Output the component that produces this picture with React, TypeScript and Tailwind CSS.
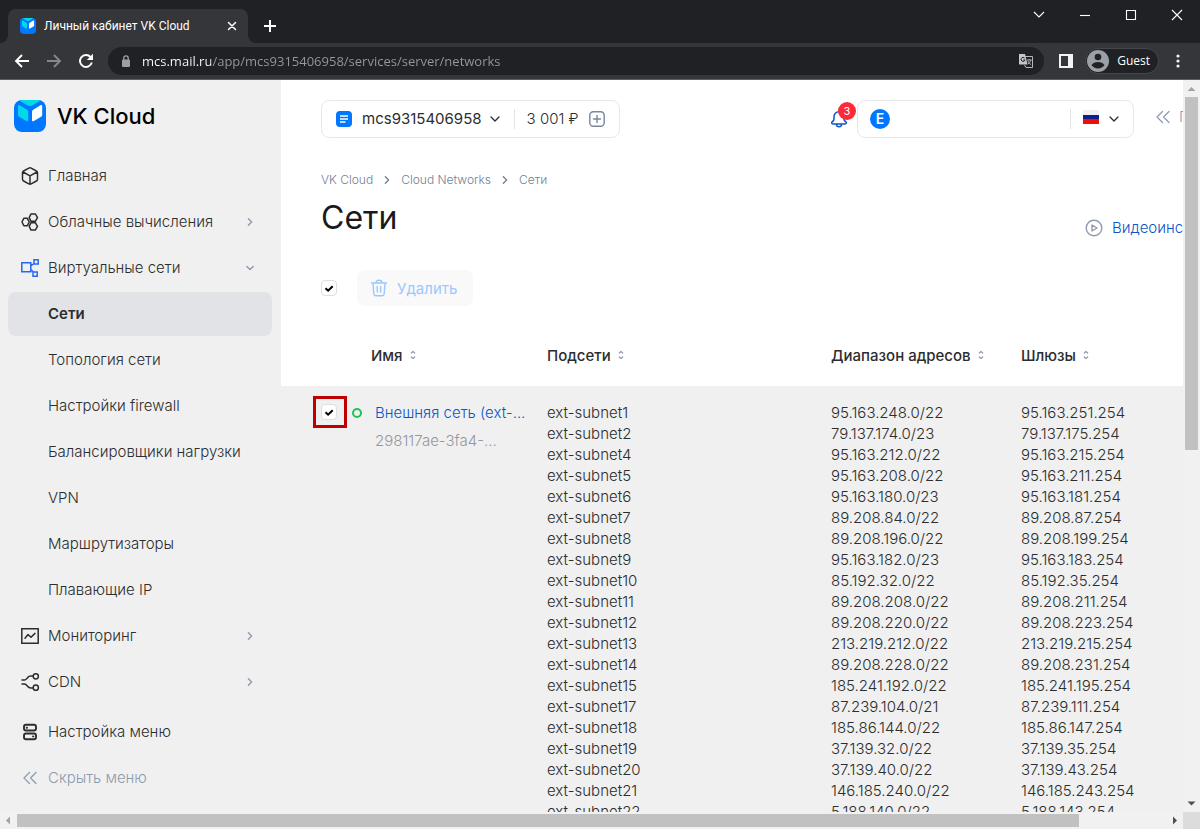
import type { ReactNode } from "react";

const stroke = {
  fill: "none",
  stroke: "currentColor",
  strokeLinecap: "round" as const,
  strokeLinejoin: "round" as const,
};

function Logo({ className }: { className: string }) {
  return (
    <svg viewBox="0 0 32 32" className={className} aria-hidden="true">
      <rect width="32" height="32" rx="8" fill="#0077ff" />
      <path d="M7 0h18c1 .3 1 .9.2 1.4l-7 4.100c-1.400.8-3 .8-4.400 0l-7-4.100C6 .9 6 .3 7 0Z" fill="#00d9e8" />
      <path d="M4 6.200c0-1 .8-1.500 1.700-1l7 4.200c1 .6 1.500 1.500 1.500 2.600v8c0 1.200-.9 1.700-1.900 1.100l-6.800-4C4.500 16.500 4 15.600 4 14.500Z" fill="#00d9e8" />
      <path d="M28.200 6.200c0-1-.8-1.500-1.700-1l-7 4.200c-1 .6-1.500 1.500-1.500 2.600v8c0 1.200.9 1.700 1.900 1.100l6.800-4c1-.6 1.500-1.500 1.500-2.600Z" fill="#fff" />
    </svg>
  );
}

function Chevron({ className, dir, width = "1.3" }: { className: string; dir: "down" | "right"; width?: string }) {
  return (
    <svg viewBox="0 0 10 10" className={className} {...stroke} strokeWidth={width} aria-hidden="true">
      <path d={dir === "down" ? "M1 3l4 4 4-4" : "M3 1l4 4-4 4"} />
    </svg>
  );
}

function DoubleLeft({ className }: { className: string }) {
  return (
    <svg viewBox="0 0 20 20" className={className} {...stroke} strokeWidth="1.3" aria-hidden="true">
      <path d="M9.500 4.500L4 10l5.500 5.500M16 4.500L10.500 10l5.500 5.500" />
    </svg>
  );
}

function NavIcon({ children, width = "1.5" }: { children: ReactNode; width?: string }) {
  return (
    <svg viewBox="0 0 20 20" className="size-5 shrink-0" {...stroke} strokeWidth={width} aria-hidden="true">
      {children}
    </svg>
  );
}

const icons = {
  home: (
    <NavIcon>
      <path d="M8.800 2.100a2.400 2.400 0 0 1 2.400 0l5.200 2.900a2 2 0 0 1 1.100 1.800v6.400a2 2 0 0 1-1.100 1.800l-5.200 2.900a2.400 2.400 0 0 1-2.400 0L3.600 15a2 2 0 0 1-1.100-1.800V6.800A2 2 0 0 1 3.600 5ZM3 6l7 3.900L17 6M10 9.900V18" />
    </NavIcon>
  ),
  compute: (
    <NavIcon>
      <path d="M3.800 6.300h3.500L9.200 10l-1.900 3.700H3.800L2 10ZM11 1.900h4.300l2.200 3.700-2.200 3.700H11L9.200 5.600ZM11 10.700h4.300l2.200 3.700-2.200 3.700H11l-1.800-3.700Z" />
    </NavIcon>
  ),
  network: (
    <NavIcon>
      <path d="M1.800 4.800h9v9h-9ZM14 1.800h4.200V6H14ZM13 14h4.200v4.200H13ZM10.800 7.800L14 5.500M10.800 11.500L13.500 14" strokeLinejoin="miter" />
    </NavIcon>
  ),
  monitoring: (
    <NavIcon>
      <path d="M1.800 2.800h16.400v14.400H1.800Z" strokeLinejoin="miter" />
      <path d="M5 12.200l3-3.700 3 2.700 4-3.800" />
    </NavIcon>
  ),
  cdn: (
    <NavIcon>
      <path d="M2 8h2.500c1.600 0 2-.8 3-2.200s1.800-1.800 3.300-1.800H13M2 12h2.500c1.600 0 2 .8 3 2.200s1.800 1.800 3.300 1.800H13" />
      <circle cx="15.800" cy="4.300" r="2.600" />
      <circle cx="15.800" cy="15.700" r="2.600" />
    </NavIcon>
  ),
  settings: (
    <NavIcon width="1.9">
      <rect x="4" y="2.800" width="12" height="5.700" rx="2" />
      <rect x="4" y="11.500" width="12" height="5.700" rx="2" />
      <path d="M6.700 5.700h.3M13 14.400h.3" />
    </NavIcon>
  ),
  collapse: <DoubleLeft className="size-5 shrink-0" />,
};

type Item = {
  label: string;
  icon?: keyof typeof icons;
  arrow?: "down" | "right";
  active?: boolean;
  accent?: boolean;
};

const menu: Item[] = [
  { label: "Главная", icon: "home" },
  { label: "Облачные вычисления", icon: "compute", arrow: "right" },
  { label: "Виртуальные сети", icon: "network", arrow: "down", accent: true },
  { label: "Сети", active: true },
  { label: "Топология сети" },
  { label: "Настройки firewall" },
  { label: "Балансировщики нагрузки" },
  { label: "VPN" },
  { label: "Маршрутизаторы" },
  { label: "Плавающие IP" },
  { label: "Мониторинг", icon: "monitoring", arrow: "right" },
  { label: "CDN", icon: "cdn", arrow: "right" },
];

function MenuItem({ item }: { item: Item }) {
  return (
    <a
      href="#"
      className={
        item.active
          ? "flex h-11 items-center gap-2 rounded-lg bg-[#e1e3e6] pl-3 pr-[18px] font-semibold"
          : "flex h-11 items-center gap-2 rounded-lg pl-3 pr-[18px]"
      }
    >
      <span className={item.accent ? "size-5 shrink-0 text-[#2568f0]" : "size-5 shrink-0"}>
        {item.icon && icons[item.icon]}
      </span>
      <span className="flex-1 whitespace-nowrap">{item.label}</span>
      {item.arrow && <Chevron dir={item.arrow} width="1.7" className="size-2 text-[#8e9bae]" />}
    </a>
  );
}

function Check({ label }: { label: string }) {
  return (
    <label className="grid size-4 place-items-center">
      <input
        type="checkbox"
        defaultChecked
        aria-label={label}
        className="peer col-start-1 row-start-1 size-4 appearance-none rounded border border-[#dcdfe4] bg-white"
      />
      <svg viewBox="0 0 16 16" className="pointer-events-none col-start-1 row-start-1 hidden size-4 text-black peer-checked:block" {...stroke} strokeWidth="2" aria-hidden="true">
        <path d="M4.500 8.200l2.600 2.500 4.600-4.500" strokeLinecap="butt" strokeLinejoin="miter" />
      </svg>
    </label>
  );
}

const subnets = [
  ["ext-subnet1", "95.163.248.0/22", "95.163.251.254"],
  ["ext-subnet2", "79.137.174.0/23", "79.137.175.254"],
  ["ext-subnet4", "95.163.212.0/22", "95.163.215.254"],
  ["ext-subnet5", "95.163.208.0/22", "95.163.211.254"],
  ["ext-subnet6", "95.163.180.0/23", "95.163.181.254"],
  ["ext-subnet7", "89.208.84.0/22", "89.208.87.254"],
  ["ext-subnet8", "89.208.196.0/22", "89.208.199.254"],
  ["ext-subnet9", "95.163.182.0/23", "95.163.183.254"],
  ["ext-subnet10", "85.192.32.0/22", "85.192.35.254"],
  ["ext-subnet11", "89.208.208.0/22", "89.208.211.254"],
  ["ext-subnet12", "89.208.220.0/22", "89.208.223.254"],
  ["ext-subnet13", "213.219.212.0/22", "213.219.215.254"],
  ["ext-subnet14", "89.208.228.0/22", "89.208.231.254"],
  ["ext-subnet15", "185.241.192.0/22", "185.241.195.254"],
  ["ext-subnet17", "87.239.104.0/21", "87.239.111.254"],
  ["ext-subnet18", "185.86.144.0/22", "185.86.147.254"],
  ["ext-subnet19", "37.139.32.0/22", "37.139.35.254"],
  ["ext-subnet20", "37.139.40.0/22", "37.139.43.254"],
  ["ext-subnet21", "146.185.240.0/22", "146.185.243.254"],
  ["ext-subnet22", "5.188.140.0/22", "5.188.143.254"],
];

function Column({ index }: { index: number }) {
  return (
    <td className="p-0 pt-4 align-top">
      {subnets.map((row) => (
        <div key={row[0]}>{row[index]}</div>
      ))}
    </td>
  );
}

function Heading({ label, indent }: { label: string; indent?: boolean }) {
  return (
    <th scope="col" className={indent ? "p-0 pl-5" : "p-0"}>
      <button type="button" className="flex items-center gap-1.5 font-medium whitespace-nowrap">
        {label}
        <svg viewBox="0 0 8 10" className="h-[10px] w-2 text-[#8e9bae]" {...stroke} strokeWidth="1.2" aria-hidden="true">
          <path d="M2.300 3l1.700-1.500L5.700 3M2.300 7l1.700 1.500L5.700 7" />
        </svg>
      </button>
    </th>
  );
}

function Browser() {
  return (
    <header className="shrink-0 border-b border-[#5d5e61] bg-[#35363a] font-['Open_Sans','Noto_Sans',sans-serif] text-white">
      <div className="flex h-[43px] justify-between bg-[#202124]">
        <div className="flex pt-[9px]">
          <svg viewBox="0 0 8 8" className="size-2 self-end" aria-hidden="true">
            <path d="M8 0v8H0a8 8 0 0 0 8-8Z" fill="#35363a" />
          </svg>
          <div className="flex w-60 items-center gap-2 rounded-t-lg bg-[#35363a] pl-3 pr-[11px]">
            <Logo className="size-4" />
            <span className="flex-1 whitespace-nowrap font-['Roboto',sans-serif] text-[12px]">Личный кабинет VK Cloud</span>
            <button type="button" aria-label="Закрыть вкладку">
              <svg viewBox="0 0 10 10" className="size-[10px]" {...stroke} strokeWidth="1.5" aria-hidden="true">
                <path d="M1.500 1.500l7 7M8.500 1.500l-7 7" />
              </svg>
            </button>
          </div>
          <svg viewBox="0 0 8 8" className="size-2 self-end" aria-hidden="true">
            <path d="M0 0v8h8a8 8 0 0 1-8-8Z" fill="#35363a" />
          </svg>
          <button type="button" aria-label="Новая вкладка" className="ml-2 flex items-center">
            <svg viewBox="0 0 12 12" className="size-3" fill="none" stroke="currentColor" strokeWidth="2" aria-hidden="true">
              <path d="M6 0v12M0 6h12" />
            </svg>
          </button>
        </div>
        <div className="flex h-[30px]">
          {[
            ["Вкладки", "M1 3l5 5 5-5"],
            ["Свернуть", "M1 6.500h10"],
            ["Развернуть", "M1.500 1.500h9v9h-9Z"],
            ["Закрыть", "M1 1l10 10M11 1L1 11"],
          ].map(([label, path]) => (
            <button key={label} type="button" aria-label={label} className="grid w-[46px] place-items-center">
              <svg viewBox="0 0 12 12" className="size-3" fill="none" stroke="currentColor" strokeWidth="1.1" aria-hidden="true">
                <path d={path} />
              </svg>
            </button>
          ))}
        </div>
      </div>
      <div className="flex h-9 items-center pl-[6px] pr-5">
        {[
          ["Назад", "M15 8H2M8 2L2 8l6 6"],
          ["Вперёд", "M1 8h13M8 2l6 6-6 6"],
        ].map(([label, path], i) => (
          <button key={label} type="button" aria-label={label} className={i ? "grid w-8 place-items-center text-[#86878a]" : "grid w-8 place-items-center"}>
            <svg viewBox="0 0 16 16" className="size-4" fill="none" stroke="currentColor" strokeWidth="1.9" aria-hidden="true">
              <path d={path} />
            </svg>
          </button>
        ))}
        <button type="button" aria-label="Обновить" className="grid w-8 place-items-center">
          <svg viewBox="0 0 16 16" className="size-4" fill="none" stroke="currentColor" strokeWidth="1.900" aria-hidden="true">
            <path d="M13.800 9.500A6 6 0 1 1 12.500 4L14 5.500" />
            <path d="M15 .8v6.200H8.800Z" fill="currentColor" stroke="none" />
          </svg>
        </button>
        <div className="ml-1.5 flex h-7 flex-1 items-center rounded-full bg-[#202124] pl-[13px] pr-[10px]">
          <svg viewBox="0 0 10 12" className="mr-[11px] h-3 w-[10px]" aria-hidden="true">
            <rect x="1" y="4.500" width="8" height="7.500" rx="1" fill="#9aa0a6" />
            <path d="M2.800 5V3a2.200 2.200 0 0 1 4.400 0v2" fill="none" stroke="#9aa0a6" strokeWidth="1.300" />
          </svg>
          <input
            type="text"
            aria-label="Адрес"
            defaultValue="mcs.mail.ru/app/mcs9315406958/services/server/networks"
            className="h-5 flex-1 bg-[linear-gradient(90deg,#fff_69px,#96999d_69px)] bg-clip-text text-[13px] text-transparent outline-none"
          />
          <button type="button" aria-label="Перевести страницу">
            <svg viewBox="0 0 16 16" className="size-4" aria-hidden="true">
              <path d="M6 3.500h8.500v11H8L6.500 12" fill="none" stroke="#b4b6b9" />
              <path d="M1 1h6l2.500 10.500H1.500A.5.5 0 0 1 1 11Z" fill="#c4c6c9" />
              <path d="M6.500 5A2 2 0 1 0 7 7H5.200" fill="none" stroke="#202124" />
              <path d="M9 7h4.500M11.200 6v1M12.800 7c-.5 2-1.500 3-3 4M10 8c.5 1.500 1.500 2.500 3 3.500" fill="none" stroke="#b4b6b9" />
            </svg>
          </button>
        </div>
        <button type="button" aria-label="Боковая панель" className="ml-[15px]">
          <svg viewBox="0 0 14 14" className="size-[14px]" aria-hidden="true">
            <path d="M0 0h14v14H0ZM2 2v10h7V2Z" fill="#f1f3f4" fillRule="evenodd" />
          </svg>
        </button>
        <button type="button" className="ml-3 flex h-[26px] items-center gap-2 rounded-full border border-[#46474b] bg-[#202124] pl-px pr-2 text-[12px]">
          <svg viewBox="0 0 22 22" className="size-[22px]" aria-hidden="true">
            <circle cx="11" cy="11" r="11" fill="#9aa0a6" />
            <circle cx="11" cy="7" r="3.300" fill="#202124" />
            <path d="M4.500 15c1.300-2 3.700-3 6.500-3s5.200 1 6.500 3c-1.400 2.200-3.800 3.500-6.500 3.500S5.900 17.200 4.500 15Z" fill="#202124" />
          </svg>
          Guest
        </button>
        <button type="button" aria-label="Меню браузера" className="ml-[17px]">
          <svg viewBox="0 0 4 14" className="h-[14px] w-1" fill="#f1f3f4" aria-hidden="true">
            <circle cx="2" cy="2" r="1.600" />
            <circle cx="2" cy="7" r="1.600" />
            <circle cx="2" cy="12" r="1.600" />
          </svg>
        </button>
      </div>
    </header>
  );
}

function Arrow({ path, className }: { path: string; className: string }) {
  return (
    <svg viewBox="0 0 17 17" className={className} fill="currentColor" aria-hidden="true">
      <path d={path} />
    </svg>
  );
}

function Sidebar() {
  return (
    <aside className="flex w-[281px] shrink-0 flex-col bg-[#f0f0f0] pl-2 pr-[9px] pt-5 leading-5">
      <a href="#" className="flex items-center gap-[11px] pl-1.5 text-[22px] leading-8 font-medium text-black">
        <Logo className="size-8" />
        VK Cloud
      </a>
      <nav aria-label="Разделы" className="mt-[22px] flex flex-col gap-0.5">
        {menu.map((item) => (
          <MenuItem key={item.label} item={item} />
        ))}
      </nav>
      <div className="mt-1.5 flex flex-col gap-0.5">
        <button type="button" className="flex h-11 items-center gap-2 pl-3">
          {icons.settings}
          Настройка меню
        </button>
        <button type="button" className="flex h-11 items-center gap-2 pl-3 text-[#8e9bae]">
          {icons.collapse}
          Скрыть меню
        </button>
      </div>
    </aside>
  );
}

function TopBar() {
  return (
    <div className="flex h-[38px] items-center pl-10 leading-5">
      <div className="flex h-full items-center rounded-lg border border-[#e7e8ec] px-3.5">
        <button type="button" className="flex items-center gap-2.5 font-normal">
          <svg viewBox="0 0 16 16" className="size-4" aria-hidden="true">
            <rect width="16" height="16" rx="4" fill="#0077ff" />
            <path d="M4 5h8M4 8h8M4 11h5.500" stroke="#fff" strokeWidth="1.300" />
          </svg>
          mcs9315406958
          <Chevron dir="down" className="-ml-0.5 size-[10px]" />
        </button>
        <span className="mx-3.5 h-5 w-px bg-[#e1e3e6]" />
        <span className="-ml-0.5">3 001 ₽</span>
        <button type="button" aria-label="Пополнить" className="ml-2.5 text-[#76869b]">
          <svg viewBox="0 0 16 16" className="size-4" {...stroke} strokeWidth="1.4" aria-hidden="true">
            <rect x=".8" y=".8" width="14.400" height="14.400" rx="3.500" />
            <path d="M8 4.500v7M4.500 8h7" />
          </svg>
        </button>
      </div>
      <button type="button" aria-label="Уведомления" className="relative ml-auto text-[#0b55c4]">
        <svg viewBox="0 0 18 18" className="size-[18px]" {...stroke} strokeWidth="1.500" aria-hidden="true">
          <path d="M9 1.800C5.900 1.800 4 4 4 6.800v2.400c0 .7-.3 1.200-.8 1.700l-1 1c-1 1-.5 2.100.8 2.100h12c1.300 0 1.800-1.100.8-2.100l-1-1c-.5-.5-.8-1-.8-1.700V6.800c0-2.800-1.900-5-5-5ZM6.500 14.500a2.500 2.300 0 0 0 5 0" />
        </svg>
        <span className="absolute -top-2 left-2 grid size-[18px] place-items-center rounded-full bg-[#fb2b3a] text-[11px] leading-none font-normal text-white">
          3
        </span>
      </button>
      <div className="ml-[9px] flex h-full w-[277px] items-center justify-between rounded-lg border border-[#e7e8ec] px-3">
        <button type="button" aria-label="Профиль" className="grid size-5 place-items-center rounded-full bg-[#0077ff] text-[14px] leading-none font-semibold text-white">
          E
        </button>
        <button type="button" aria-label="Язык" className="flex h-5 items-center gap-2.5 border-l border-[#e1e3e6] pl-3">
          <svg viewBox="0 0 16 14" className="-mt-1 h-[14px] w-4" aria-hidden="true">
            <path d="M0 0h16v5H0Z" fill="#f0f0f0" />
            <path d="M0 5h16v4H0Z" fill="#0a1f96" />
            <path d="M0 9h16v5H0Z" fill="#ee1100" />
          </svg>
          <Chevron dir="down" className="mr-[2px] size-[10px]" />
        </button>
      </div>
      <button type="button" className="ml-[19px] flex w-[127px] items-center gap-1.5 pb-1 text-[#8e9bae]">
        <DoubleLeft className="size-5" />
        Помощь
      </button>
    </div>
  );
}

export default function App() {
  return (
    <div className="flex h-screen flex-col overflow-hidden">
      <Browser />
      <div className="flex min-h-0 flex-1">
        <div className="min-w-0 flex-1 overflow-hidden bg-[#f0f0f0] font-['Inter',sans-serif] text-[15px] leading-[21px] font-light text-[#2c2d2e]">
          <div className="flex min-w-[1280px]">
            <Sidebar />
            <main className="min-w-0 flex-1 bg-white pt-5">
              <TopBar />
              <nav aria-label="Путь" className="mt-[34px] flex items-center gap-2.5 pl-10 text-[12px] leading-4 text-[#708095]">
                <a href="#">VK Cloud</a>
                <Chevron dir="right" width="1.7" className="size-2" />
                <a href="#">Cloud Networks</a>
                <Chevron dir="right" width="1.7" className="size-2" />
                <span>Сети</span>
              </nav>
              <div className="mt-2.5 flex items-start justify-between pl-10">
                <h1 className="text-[32px] leading-10 font-normal text-[#1a1a1c]">Сети</h1>
                <a href="#" className="mt-5 flex w-[195px] items-center gap-[9px] leading-5 text-[#0b55c4]">
                  <svg viewBox="0 0 18 18" className="size-[18px] text-[#8e9bae]" {...stroke} strokeWidth="1.400" aria-hidden="true">
                    <circle cx="9" cy="9" r="7.800" />
                    <path d="M7 6l5 3-5 3Z" />
                  </svg>
                  Видеоинструкция
                </a>
              </div>
              <div className="mt-8 flex items-center gap-5 pl-10">
                <Check label="Выбрать все сети" />
                <button type="button" disabled className="flex h-9 items-center gap-[9px] rounded-lg bg-[#f9f9f9] pl-[13px] pr-4 font-normal text-[#99c9ff]">
                  <svg viewBox="0 0 18 18" className="size-[18px]" {...stroke} strokeWidth="1.400" aria-hidden="true">
                    <path d="M1.500 4h15M6 3.800c0-1.700.8-2.500 3-2.500s3 .8 3 2.500M3 4.200l.8 10.600c.1 1.200.8 1.900 2 1.900h6.400c1.200 0 1.900-.7 2-1.900L15 4.200M7.200 7.500l.2 5.500M10.800 7.500l-.2 5.500" />
                  </svg>
                  Удалить
                </button>
              </div>
              <table className="mt-[18px] w-full table-fixed border-collapse text-left">
                <colgroup>
                  <col className="w-[70px]" />
                  <col className="w-[196px]" />
                  <col className="w-[284px]" />
                  <col className="w-[190px]" />
                  <col />
                </colgroup>
                <thead>
                  <tr className="h-[62px]">
                    <td className="p-0" />
                    <Heading label="Имя" indent />
                    <Heading label="Подсети" />
                    <Heading label="Диапазон адресов" />
                    <Heading label="Шлюзы" />
                  </tr>
                </thead>
                <tbody>
                  <tr className="bg-[#f0f0f0]">
                    <td className="p-0 pl-10 pt-[18px] align-top">
                      <div className="relative size-4">
                        <Check label="Выбрать сеть" />
                        <span className="pointer-events-none absolute -top-2 -right-2.5 -bottom-2 -left-2 border-3 border-[#c00000]" />
                      </div>
                    </td>
                    <td className="p-0 pt-4 align-top">
                      <div className="flex items-center gap-[13px] pl-px">
                        <span className="size-[10px] rounded-full border-2 border-[#1fc255]" />
                        <a href="#" className="whitespace-nowrap text-[#0b55c4]">Внешняя сеть (ext-...</a>
                      </div>
                      <div className="mt-[7px] pl-6 text-[#9299a2]">298117ae-3fa4-...</div>
                    </td>
                    <Column index={0} />
                    <Column index={1} />
                    <Column index={2} />
                  </tr>
                </tbody>
              </table>
            </main>
          </div>
        </div>
        <div className="flex w-[17px] shrink-0 flex-col bg-[#f1f1f1]">
          <Arrow className="size-[17px] text-[#a3a3a3]" path="M4.500 11h8L8.500 7Z" />
          <div className="flex-1 px-0.5">
            <div className="h-[50.600%] bg-[#c1c1c1]" />
          </div>
          <Arrow className="size-[17px] text-[#505050]" path="M4.500 6.500h8l-4 4Z" />
        </div>
      </div>
      <div className="flex h-[17px] shrink-0 bg-[#f1f1f1]">
        <Arrow className="size-[17px] text-[#a3a3a3]" path="M10 4.500v8L6 8.500Z" />
        <div className="flex-1 py-0.5">
          <div className="h-full w-[92.400%] bg-[#c1c1c1]" />
        </div>
        <Arrow className="size-[17px] text-[#505050]" path="M7 4.500v8l4-4Z" />
        <div className="w-[17px] bg-[#dcdcdc]" />
      </div>
    </div>
  );
}
